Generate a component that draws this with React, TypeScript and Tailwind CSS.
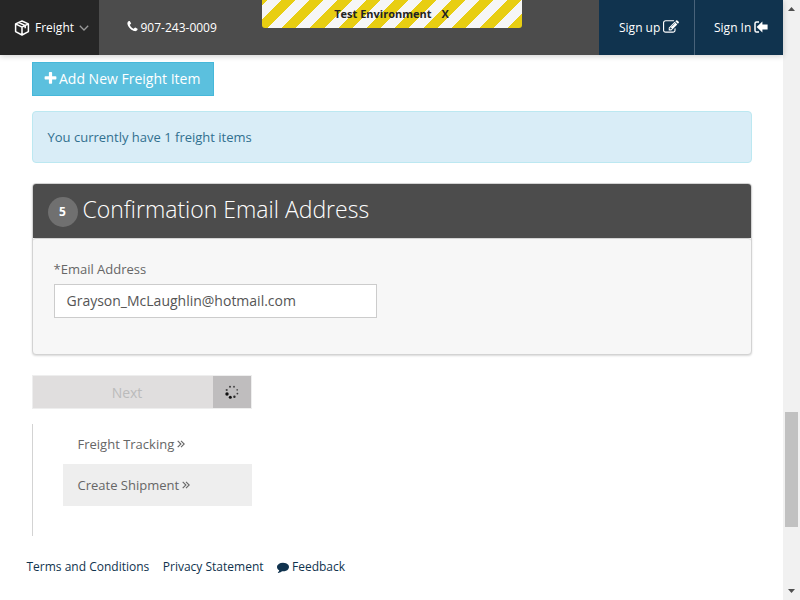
import React from "react";

type GlyphProps = { d: string; className: string; viewBox?: string };

function Glyph({ d, className, viewBox = "0 0 1792 1792" }: GlyphProps) {
  return (
    <svg viewBox={viewBox} className={className} fill="currentColor">
      <path d={d} />
    </svg>
  );
}

const PHONE =
  "M1600 1240q0 27-10 70.5t-21 68.5q-21 50-122 106-94 51-186 51-27 0-53-3.5t-57.5-12.5-47-14.5-55.5-20.5-49-18q-98-35-175-83-127-79-264-216t-216-264q-48-77-83-175-3-9-18-49t-20.5-55.5-14.5-47-12.5-57.5-3.5-53q0-92 51-186 56-101 106-122 25-11 68.5-21t70.5-10q14 0 21 3 18 6 53 76 11 19 30 54t35 63.5 31 53.5q3 4 17.5 25t21.5 35.5 7 28.5q0 20-28.5 50t-62 55-62 53-28.5 46q0 9 5 22.5t8.5 20.5 14 24 11.5 19q76 137 174 235t235 174q2 1 19 11.5t24 14 20.5 8.5 22.5 5q18 0 46-28.5t53-62 55-62 50-28.5q14 0 28.5 7t35.5 21.5 25 17.5q25 15 53.5 31t63.5 35 54 30q70 35 76 53 3 7 3 21z";
const PLUS =
  "M1600 736v192q0 40-28 68t-68 28h-416v416q0 40-28 68t-68 28h-192q-40 0-68-28t-28-68v-416h-416q-40 0-68-28t-28-68v-192q0-40 28-68t68-28h416v-416q0-40 28-68t68-28h192q40 0 68 28t28 68v416h416q40 0 68 28t28 68z";
const EDIT =
  "M888 1184l116-116-152-152-116 116v56h96v96h56zm440-720q-16-16-33 1l-350 350q-17 17-1 33t33-1l350-350q17-17 1-33zm80 594v190q0 119-84.5 203.5t-203.5 84.5h-832q-119 0-203.5-84.5t-84.5-203.5v-832q0-119 84.5-203.5t203.5-84.5h832q63 0 117 25 15 7 18 23 3 17-9 29l-49 49q-14 14-32 8-23-6-45-6h-832q-66 0-113 47t-47 113v832q0 66 47 113t113 47h832q66 0 113-47t47-113v-126q0-13 9-22l64-64q15-15 35-7t20 29zm-96-738l288 288-672 672h-288v-288zm444 132l-92 92-288-288 92-92q28-28 68-28t68 28l152 152q28 28 28 68t-28 68z";
const COMMENT =
  "M1792 896q0 174-120 321.5t-326 233-450 85.5q-70 0-145-8-198 175-460 242-49 14-114 22-17 2-30.5-9t-17.5-29v-1q-3-4-.5-12t2-10 4.5-9.5l6-9 7-8.5 8-9q7-8 31-34.5t34.5-38 31-39.5 32.5-51 27-59 26-76q-157-89-247.5-220t-90.5-281q0-130 71-248.5t191-204.5 286-136.5 348-50.5q244 0 450 85.5t326 233 120 321.5z";

function BoxIcon() {
  return (
    <svg viewBox="0 0 16 16" className="h-4 w-4" fill="none" stroke="#fff" strokeWidth="1.5" strokeLinejoin="round">
      <path d="M8 1 14.4 3.9V11.6L8 15 1.6 11.6V3.9ZM1.6 3.9 8 7.2 14.4 3.9M8 7.2V15M4.8 2.5 11.2 5.7V8.3" />
    </svg>
  );
}

function SignInIcon() {
  return (
    <svg viewBox="0 0 14 12" className="h-3 w-3.5">
      <path d="M5 1H2.6Q1 1 1 2.6V9.4Q1 11 2.6 11H5" fill="none" stroke="#fff" strokeWidth="1.5" />
      <path d="M2.6 6 8.4.6V3.6H13.6V8.4H8.4V11.4Z" fill="#fff" />
    </svg>
  );
}

function DoubleAngle() {
  return (
    <svg viewBox="0 0 8 8" className="mb-0.5 ml-[3px] h-2 w-2" fill="none" stroke="currentColor" strokeWidth="1.1">
      <path d="M.7.8 3.9 4 .7 7.2M4 .8 7.2 4 4 7.2" />
    </svg>
  );
}

function Spinner() {
  return (
    <svg viewBox="0 0 16 16" className="h-4 w-4" fill="#111">
      <circle cx="6" cy="2.8" r="1" opacity=".75" />
      <circle cx="10" cy="2.8" r="1" opacity=".65" />
      <circle cx="13.2" cy="5.8" r=".9" opacity=".6" />
      <circle cx="13.4" cy="9.6" r=".9" opacity=".75" />
      <circle cx="10.4" cy="12.8" r="1.2" opacity=".85" />
      <circle cx="6.3" cy="13.2" r="1.5" />
      <circle cx="3" cy="10" r="1.7" />
      <circle cx="2.7" cy="6" r="1.1" opacity=".7" />
    </svg>
  );
}

function Header() {
  return (
    <header className="relative z-10 flex h-[55px] bg-[#4c4c4c] text-xs font-medium text-white shadow-[0_1px_6px_rgba(0,0,0,0.2)]">
      <div className="flex w-[99px] items-center bg-[#262626] pl-[14px]">
        <BoxIcon />
        <span className="ml-[5px] w-[41px]">Freight</span>
        <svg viewBox="0 0 10 6" className="ml-[3px] h-1.5 w-2.5" fill="none" stroke="#999" strokeWidth="1.3">
          <path d="M.8.8 5 5 9.2.8" />
        </svg>
      </div>
      <div className="flex items-center pl-[27px]">
        <Glyph d={PHONE} className="-mt-0.5 h-[13px] w-[13px]" />
        <span className="ml-[1.5px]">907-243-0009</span>
      </div>
      <div className="ml-auto flex w-[184px] bg-[#10334e]">
        <div className="flex w-24 items-center border-r border-[#49637a] pl-5">
          <span className="w-[42px]">Sign up</span>
          <Glyph d={EDIT} className="-mt-0.5 ml-[2px] h-4 w-4" />
        </div>
        <div className="flex items-center pl-[19px]">
          <span className="w-[39px]">Sign In</span>
          <span className="-mt-0.5 ml-px"><SignInIcon /></span>
        </div>
      </div>
      <div className="absolute left-[262px] top-0 flex h-7 w-[260px] justify-center rounded-b-[3px] bg-[repeating-linear-gradient(-45deg,#e8ce12,#e8ce12_10px,#f6f6f6_10px,#f6f6f6_20px)] pr-px text-[11px] font-bold leading-7 text-[#222]">
        <span>Test Environment</span>
        <span className="ml-2.5">X</span>
      </div>
    </header>
  );
}

export default function App() {
  return (
    <div className="flex h-[600px] w-[800px] overflow-hidden bg-white font-['Open_Sans',sans-serif] text-[13px] text-[#666]">
      <div className="w-[783px]">
        <Header />
        <main className="pl-8 pr-[31px] pt-[7px]">
          <button className="flex h-[34px] w-[182px] items-center border border-[#46b8da] bg-[#5bc0de] pl-[10px] text-sm text-white">
            <Glyph d={PLUS} className="-mt-0.5 h-[15px] w-[15px]" />
            <span className="ml-[1px]">Add New Freight Item</span>
          </button>
          <div className="mt-[15px] flex h-[52px] items-center rounded border border-[#bce8f1] bg-[#d9edf7] pl-[14.5px] pt-0.5 text-[#31708f]">
            You currently have 1 freight items
          </div>
          <section className="mt-5 h-[172px] rounded border border-[#d3d3d3] bg-[#f7f7f7] shadow-[0_1px_2px_rgba(0,0,0,0.15)]">
            <div className="flex h-[54px] items-center rounded-t-[3px] bg-[#4c4c4c] pl-[15px] text-white">
              <span className="mt-[2px] flex h-[30px] w-[30px] items-center justify-center rounded-full bg-[#707070] pr-px text-xs font-bold">5</span>
              <h2 className="-mt-1 ml-[4.5px] text-[23px] font-light leading-8">Confirmation Email Address</h2>
            </div>
            <div className="rounded-t-[3px] border-t border-[#d3d3d3] pl-[21px] pt-5">
              <label className="-ml-[0.5px] block leading-5">*Email Address</label>
              <div className="mt-[5px] flex h-[34px] w-[323px] items-center border border-[#ccc] bg-white pl-[11.5px] text-sm text-[#555]">
                Grayson_McLaughlin@hotmail.com
              </div>
            </div>
          </section>
          <div className="mt-5 flex h-[34px] w-[220px] border border-[#eee] text-sm">
            <div className="flex w-[180px] items-center justify-center bg-[#e0dede] pl-2 pt-0.5 text-[#bbb]">Next</div>
            <div className="flex flex-1 items-center justify-center bg-[#bfbdbe]"><Spinner /></div>
          </div>
          <nav className="mt-[15px] h-[112px] w-[220px] border-l border-[#d3d3d3] pl-[30px]">
            <a className="flex h-10 items-center pl-[14.5px] pt-0.5">Freight Tracking<DoubleAngle /></a>
            <a className="flex h-[42px] items-center bg-[#eee] pl-[14.5px] pt-0.5">Create Shipment<DoubleAngle /></a>
          </nav>
        </main>
        <footer className="mt-[21px] flex h-5 items-center pl-[26.5px] text-xs text-[#10334e]">
          <a>Terms and Conditions</a>
          <a className="ml-[13.5px]">Privacy Statement</a>
          <a className="ml-[13.5px] flex items-center"><Glyph d={COMMENT} className="mr-[3px] h-3 w-3" />Feedback</a>
        </footer>
      </div>
      <div className="flex w-[17px] flex-col items-center bg-[#f1f1f1] pt-[7px] pb-[7px]">
        <svg viewBox="0 0 7 4" className="h-1 w-[7px]" fill="#505050"><path d="M0 4 3.5 0 7 4Z" /></svg>
        <div className="mt-[401px] h-[115px] w-[13px] bg-[#c1c1c1]" />
        <svg viewBox="0 0 7 4" className="mt-auto h-1 w-[7px]" fill="#505050"><path d="M0 0H7L3.5 4Z" /></svg>
      </div>
    </div>
  );
}
